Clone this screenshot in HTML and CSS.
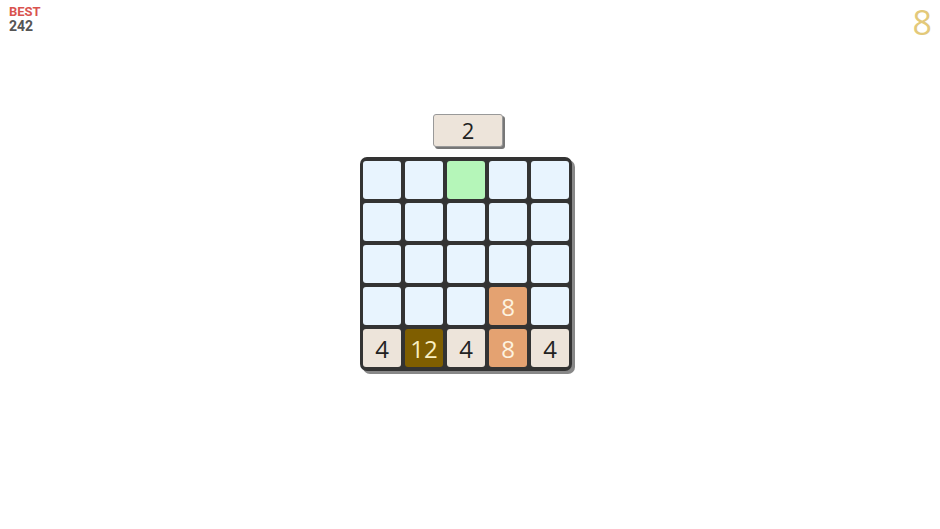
FILE: index.html
```html
<!DOCTYPE html>
<html lang="en">
  <head>
    <meta charset="UTF-8" />
    <meta name="viewport" content="width=device-width, initial-scale=1.0" />
    <title>merge 5x5</title>
    <link rel="stylesheet" href="styles.css">
  </head>
  <body>
    <div class="header">
      <div class="best">
        <div class="best-label">BEST</div>
        <div class="best-value">242</div>
      </div>
      <div class="score">8</div>
    </div>

    <div class="game">
      <div class="next">2</div>
      <div class="board">
        <div class="cell"></div>
        <div class="cell"></div>
        <div class="cell drop"></div>
        <div class="cell"></div>
        <div class="cell"></div>

        <div class="cell"></div>
        <div class="cell"></div>
        <div class="cell"></div>
        <div class="cell"></div>
        <div class="cell"></div>

        <div class="cell"></div>
        <div class="cell"></div>
        <div class="cell"></div>
        <div class="cell"></div>
        <div class="cell"></div>

        <div class="cell"></div>
        <div class="cell"></div>
        <div class="cell"></div>
        <div class="cell t8">8</div>
        <div class="cell"></div>

        <div class="cell t4">4</div>
        <div class="cell t12">12</div>
        <div class="cell t4">4</div>
        <div class="cell t8">8</div>
        <div class="cell t4">4</div>
      </div>
    </div>
  </body>
</html>
```

FILE: styles.css
```css
body {
  margin: 0;
  padding: 0;
  font-family: "Open Sans", "Noto Sans", sans-serif;
  background-color: #fff;
  height: 529px;
  overflow: hidden;
}

.header {
  display: flex;
  justify-content: space-between;
  align-items: flex-start;
  padding: 4px 8px 0 9px;
  height: 106px;
}

.best {
  font-family: Roboto, "Liberation Sans", sans-serif;
  font-weight: bold;
  line-height: 15px;
}

.best-label {
  color: #d9534f;
  font-size: 13px;
}

.best-value {
  color: #555;
  font-size: 14px;
}

.score {
  color: #e3c97a;
  font-size: 34px;
  line-height: 38px;
  font-weight: 400;
  margin-top: -1px;
}

.game {
  display: flex;
  flex-direction: column;
  align-items: center;
  padding-top: 4px;
  padding-right: 8px;
}

.next {
  width: 68px;
  height: 31px;
  background-color: #ede4da;
  border: 1px solid #999;
  border-radius: 3px;
  box-shadow: 2px 2px 0 #777;
  color: #222;
  font-size: 22px;
  line-height: 31px;
  text-align: center;
  margin-bottom: 10px;
  margin-left: 4px;
}

.board {
  display: grid;
  grid-template-columns: repeat(5, 38px);
  grid-template-rows: repeat(5, 38px);
  gap: 4px;
  padding: 4px 3px;
  background-color: #333;
  border-radius: 7px;
  box-shadow: 3px 3px 0 #888;
}

.cell {
  background-color: #e8f4fe;
  border-radius: 3px;
  display: flex;
  align-items: center;
  justify-content: center;
  font-size: 24px;
  color: #222;
}

.drop {
  background-color: #b5f6b9;
}

.t4 {
  background-color: #ede4da;
}

.t8 {
  background-color: #e4a271;
  color: #fdf3e0;
}

.t12 {
  background-color: #7f5e00;
  color: #f9efc0;
}
```
